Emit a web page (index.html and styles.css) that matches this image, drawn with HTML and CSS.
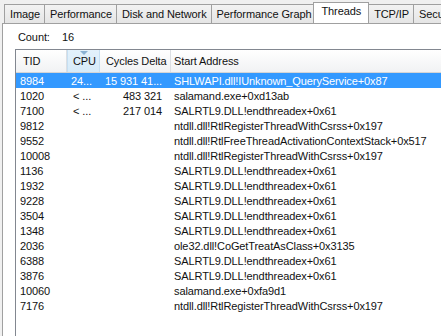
FILE: index.html
```html
<!DOCTYPE html>
<html lang="en">
<head>
    <meta charset="UTF-8">
    <title>Threads</title>
    <link rel="stylesheet" href="styles.css">
</head>
<body>
    <div class="tabs">
        <div class="tab">Image</div>
        <div class="tab">Performance</div>
        <div class="tab">Disk and Network</div>
        <div class="tab">Performance Graph</div>
        <div class="tab active">Threads</div>
        <div class="tab">TCP/IP</div>
        <div class="tab">Secu</div>
    </div>

    <div class="panel">
        <div class="count"><span class="count-label">Count:</span><span>16</span></div>

        <div class="list">
            <div class="row head">
                <div class="cell">TID</div>
                <div class="cell sorted"><span class="arrow"></span>CPU</div>
                <div class="cell">Cycles Delta</div>
                <div class="cell">Start Address</div>
            </div>
            <div class="row selected">
                <div class="cell">8984</div>
                <div class="cell">24...</div>
                <div class="cell num">15 931 41...</div>
                <div class="cell">SHLWAPI.dll!IUnknown_QueryService+0x87</div>
            </div>
            <div class="row">
                <div class="cell">1020</div>
                <div class="cell cpu">&lt; ...</div>
                <div class="cell num">483 321</div>
                <div class="cell">salamand.exe+0xd13ab</div>
            </div>
            <div class="row">
                <div class="cell">7100</div>
                <div class="cell cpu">&lt; ...</div>
                <div class="cell num">217 014</div>
                <div class="cell">SALRTL9.DLL!endthreadex+0x61</div>
            </div>
            <div class="row"><div class="cell">9812</div><div class="cell"></div><div class="cell"></div><div class="cell">ntdll.dll!RtlRegisterThreadWithCsrss+0x197</div></div>
            <div class="row"><div class="cell">9552</div><div class="cell"></div><div class="cell"></div><div class="cell">ntdll.dll!RtlFreeThreadActivationContextStack+0x517</div></div>
            <div class="row"><div class="cell">10008</div><div class="cell"></div><div class="cell"></div><div class="cell">ntdll.dll!RtlRegisterThreadWithCsrss+0x197</div></div>
            <div class="row"><div class="cell">1136</div><div class="cell"></div><div class="cell"></div><div class="cell">SALRTL9.DLL!endthreadex+0x61</div></div>
            <div class="row"><div class="cell">1932</div><div class="cell"></div><div class="cell"></div><div class="cell">SALRTL9.DLL!endthreadex+0x61</div></div>
            <div class="row"><div class="cell">9228</div><div class="cell"></div><div class="cell"></div><div class="cell">SALRTL9.DLL!endthreadex+0x61</div></div>
            <div class="row"><div class="cell">3504</div><div class="cell"></div><div class="cell"></div><div class="cell">SALRTL9.DLL!endthreadex+0x61</div></div>
            <div class="row"><div class="cell">1348</div><div class="cell"></div><div class="cell"></div><div class="cell">SALRTL9.DLL!endthreadex+0x61</div></div>
            <div class="row"><div class="cell">2036</div><div class="cell"></div><div class="cell"></div><div class="cell">ole32.dll!CoGetTreatAsClass+0x3135</div></div>
            <div class="row"><div class="cell">6388</div><div class="cell"></div><div class="cell"></div><div class="cell">SALRTL9.DLL!endthreadex+0x61</div></div>
            <div class="row"><div class="cell">3876</div><div class="cell"></div><div class="cell"></div><div class="cell">SALRTL9.DLL!endthreadex+0x61</div></div>
            <div class="row"><div class="cell">10060</div><div class="cell"></div><div class="cell"></div><div class="cell">salamand.exe+0xfa9d1</div></div>
            <div class="row"><div class="cell">7176</div><div class="cell"></div><div class="cell"></div><div class="cell">ntdll.dll!RtlRegisterThreadWithCsrss+0x197</div></div>
        </div>
    </div>
</body>
</html>
```

FILE: styles.css
```css
html, body {
    margin: 0;
    height: 100%;
    overflow: hidden;
}
body {
    background: #f0f0f0;
    font-family: "Liberation Sans", Arial, sans-serif;
    font-size: 11px;
    letter-spacing: -0.1px;
    color: #111;
    display: flex;
    flex-direction: column;
}
.tabs {
    display: flex;
    height: 23px;
    padding-left: 4px;
    align-items: flex-end;
    white-space: nowrap;
    flex-shrink: 0;
    overflow: hidden;
}
.tab {
    height: 19px;
    line-height: 18px;
    padding: 0 4px 0 5px;
    margin-right: -1px;
    border: 1px solid #a0a0a0;
    border-bottom: none;
    background: linear-gradient(#f3f3f3, #e5e5e5);
    box-sizing: border-box;
}
.tab:last-child {
    padding-right: 20px;
}
.tab.active {
    height: 22px;
    margin: 0 -1px -1px -2px;
    padding: 0 7px;
    line-height: 17px;
    background: #fff;
    position: relative;
    z-index: 1;
}
.panel {
    flex: 1;
    margin-left: 2px;
    background: #fff;
    border-top: 1px solid #a0a0a0;
    border-left: 1px solid #a0a0a0;
    padding: 5px 0 0 12px;
    display: flex;
    flex-direction: column;
}
.count {
    height: 20px;
    line-height: 17px;
    padding-left: 3px;
}
.count-label {
    display: inline-block;
    width: 44px;
}
.list {
    flex: 1;
    border-top: 1px solid #828790;
    border-left: 1px solid #828790;
}
.row {
    display: grid;
    grid-template-columns: 51px 33px 71px 1fr;
    height: 15px;
    line-height: 16px;
    white-space: nowrap;
}
.cell {
    padding-left: 4px;
    overflow: hidden;
}
.cell.cpu {
    padding-left: 6px;
}
.cell.num {
    text-align: right;
    padding-right: 9px;
}
.cell:last-child {
    padding-left: 3px;
}
.row.head {
    height: 23px;
    line-height: 23px;
    background: linear-gradient(#ffffff, #f1f2f4);
    border-bottom: 1px solid #d5d5d5;
    box-sizing: border-box;
}
.row.head .cell {
    padding-left: 6px;
    border-right: 1px solid #dcdfe3;
    position: relative;
}
.row.head .cell:first-child {
    padding-left: 7px;
}
.row.head .cell:last-child {
    border-right: none;
    padding-left: 3px;
}
.row.head .cell.sorted {
    background: linear-gradient(#e3f1fb, #d6ebf9);
    border-left: 1px solid #c6dff2;
    border-right: 1px solid #c6dff2;
    padding-left: 5px;
}
.arrow {
    position: absolute;
    left: 12px;
    top: 1px;
    border-left: 4px solid transparent;
    border-right: 4px solid transparent;
    border-top: 4px solid #8ab2d4;
}
.row.selected {
    background: #3399ff;
    color: #fff;
}
```
